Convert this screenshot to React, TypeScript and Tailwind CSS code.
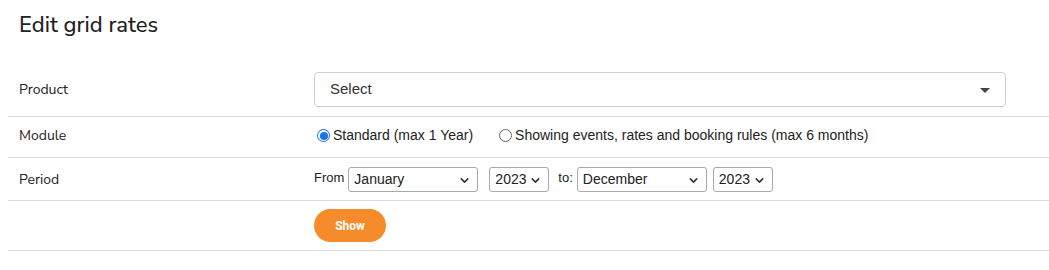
import { ChevronDown } from "lucide-react";

const sans = "font-['Nunito_Sans','Lato','Noto_Sans',sans-serif]";
const helv = "font-['Liberation_Sans',Arial,sans-serif]";

function MiniSelect({ value, width }: { value: string; width: string }) {
    return (
        <div
            className={`relative flex h-[25px] items-center rounded-[3px] border border-[#a8a8a8] bg-white pl-[5px] text-[14px] text-[#222] ${helv} ${width}`}
        >
            <span>{value}</span>
            <ChevronDown size={13} strokeWidth={2.8} className="absolute right-[6px] top-[6px] text-[#333]" />
        </div>
    );
}

function Radio({ checked, label }: { checked?: boolean; label: string }) {
    return (
        <label className="flex items-center gap-[3px]">
            {checked ? (
                <span className="flex h-[13px] w-[13px] items-center justify-center rounded-full bg-[#1a73e8]">
                    <span className="flex h-[11px] w-[11px] items-center justify-center rounded-full bg-white">
                        <span className="h-[8px] w-[8px] rounded-full bg-[#1a73e8]" />
                    </span>
                </span>
            ) : (
                <span className="h-[13px] w-[13px] rounded-full border border-[#666] bg-white" />
            )}
            <span>{label}</span>
        </label>
    );
}

export default function App() {
    return (
        <div className={`h-[270px] w-[1049px] bg-white text-[#222] ${sans}`}>
            <h1 className="pl-[19px] pt-[10px] text-[22px] font-medium leading-[30px] text-[#222]">Edit grid rates</h1>

            <div className="ml-[8px] mt-[22px]">
                {/* Product */}
                <div className="flex items-center border-b border-[#dcdcdc] pb-[9px] pt-[10px]">
                    <div className="w-[306px] pl-[11px] text-[14px]">Product</div>
                    <div
                        className={`relative flex h-[35px] w-[692px] items-center rounded-[4px] border border-[#cfcfcf] pl-[15px] text-[15px] text-[#333] ${helv}`}
                    >
                        Select
                        <span className="absolute right-[15px] top-[15px] h-0 w-0 border-x-[5px] border-t-[5px] border-x-transparent border-t-[#444]" />
                    </div>
                </div>

                {/* Module */}
                <div className="flex h-[41px] items-center border-b border-[#dcdcdc] pb-[3px]">
                    <div className="w-[306px] pl-[11px] text-[14px]">Module</div>
                    <div className={`flex items-center gap-[26px] pl-[3px] text-[14px] text-[#222] ${helv}`}>
                        <Radio checked label="Standard (max 1 Year)" />
                        <Radio label="Showing events, rates and booking rules (max 6 months)" />
                    </div>
                </div>

                {/* Period */}
                <div className="flex items-center border-b border-[#dcdcdc] pb-[8px] pt-[9px]">
                    <div className="w-[306px] pl-[11px] text-[14px]">Period</div>
                    <div className={`flex items-center text-[13px] ${helv}`}>
                        <span className="mr-[4px] -mt-[4px]">From</span>
                        <MiniSelect value="January" width="w-[130px]" />
                        <div className="w-[11px]" />
                        <MiniSelect value="2023" width="w-[60px]" />
                        <span className="ml-[9px] mr-[4px] -mt-[4px]">to:</span>
                        <MiniSelect value="December" width="w-[130px]" />
                        <div className="w-[6px]" />
                        <MiniSelect value="2023" width="w-[60px]" />
                    </div>
                </div>

                {/* Show */}
                <div className="flex items-center border-b border-[#dcdcdc] py-[8px]">
                    <div className="w-[306px]" />
                    <button
                        className="h-[33px] w-[72px] rounded-full bg-[#f68b2a] font-['Roboto',sans-serif] text-[12px] font-bold text-white"
                    >
                        Show
                    </button>
                </div>
            </div>
        </div>
    );
}
